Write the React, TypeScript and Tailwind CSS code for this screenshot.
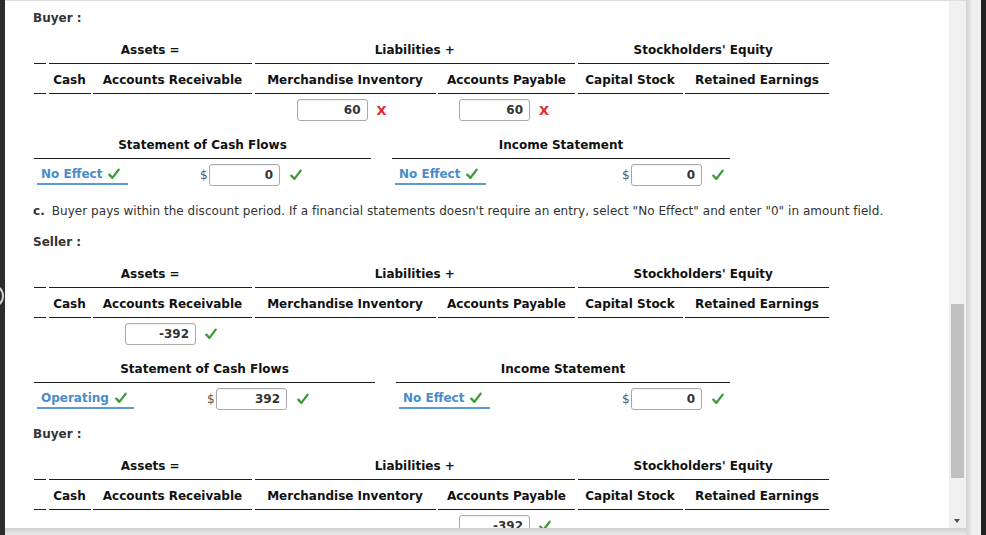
import React from "react";

const FONT = "font-['DejaVu_Sans',Verdana,sans-serif]";

function Check() {
  return (
    <svg width="12" height="12" viewBox="0 0 12 12" className="block shrink-0">
      <path
        d="M1.3 6.6 L4.4 9.9 L10.7 1.6"
        fill="none"
        stroke="#3c9b36"
        strokeWidth="2.3"
        strokeLinecap="round"
        strokeLinejoin="round"
      />
    </svg>
  );
}

function Cross() {
  return <span className="block text-[13px] leading-none font-bold text-[#e3262b]">X</span>;
}

function Amt({ v }: { v: string }) {
  return (
    <div className="h-[22px] w-[71px] shrink-0 rounded-[3px] border border-[#a9a9a9] bg-white shadow-[inset_0_1px_1px_rgba(0,0,0,0.06)] flex items-center justify-end pr-[6px] text-[12px] font-bold text-[#333]">
      {v}
    </div>
  );
}

function Label({ children, className = "" }: { children: React.ReactNode; className?: string }) {
  return (
    <div className={`h-[20px] leading-[22px] text-[12px] font-bold text-[#333] ${className}`}>{children}</div>
  );
}

const HDR =
  "h-[30px] pt-[2px] border-b border-[#1c1c1c] flex items-center justify-center text-[12px] font-bold text-[#111] whitespace-nowrap";

function Equation({ cells }: { cells: React.ReactNode[] }) {
  const cols = [
    "",
    "Cash",
    "Accounts Receivable",
    "Merchandise Inventory",
    "Accounts Payable",
    "Capital Stock",
    "Retained Earnings",
  ];
  return (
    <div className="mt-[7px] w-[795px] grid grid-cols-[12px_42px_159px_181px_137px_105px_144px] gap-x-[2.5px]">
      <div className={HDR} />
      <div className={`${HDR} col-span-2`}>Assets =</div>
      <div className={`${HDR} col-span-2`}>Liabilities +</div>
      <div className={`${HDR} col-span-2`}>Stockholders' Equity</div>
      {cols.map((c, i) => (
        <div key={i} className={HDR}>
          {c}
        </div>
      ))}
      {cells.map((c, i) => (
        <div key={"i" + i} className="h-[36px] pt-[5px]">
          {c}
        </div>
      ))}
    </div>
  );
}

function AmtMark({ v, ok, pad }: { v: string; ok: boolean; pad: string }) {
  return (
    <div className={`flex items-center ${pad}`}>
      <Amt v={v} />
      <div className="ml-[9px]">{ok ? <Check /> : <Cross />}</div>
    </div>
  );
}

function Drop({ text, w }: { text: string; w: string }) {
  return (
    <div className={`ml-[3px] ${w} h-[21px] border-b-2 border-[#5b9bd5] flex items-center pl-[4px] pt-[1px] shrink-0`}>
      <span className="text-[12px] font-bold text-[#4a8bc9] whitespace-nowrap">{text}</span>
      <span className="ml-[6px]">
        <Check />
      </span>
    </div>
  );
}

function Dollar({ v, ml }: { v: string; ml: string }) {
  return (
    <div className={`flex items-center ${ml}`}>
      <span className="w-[9px] text-[12px] text-[#555]">$</span>
      <Amt v={v} />
      <div className="ml-[10px]">
        <Check />
      </div>
    </div>
  );
}

function SCF({
  lw,
  rw,
  lDrop,
  lDropW,
  lMl,
  lVal,
  rMl,
  rowH,
}: {
  lw: string;
  rw: string;
  lDrop: string;
  lDropW: string;
  lMl: string;
  lVal: string;
  rMl: string;
  rowH: string;
}) {
  const H =
    "h-[29px] pt-[2px] border-b border-[#1c1c1c] flex items-center justify-center text-[12px] font-bold text-[#111] whitespace-nowrap";
  return (
    <div className="flex gap-x-[21px]">
      <div className={lw}>
        <div className={H}>Statement of Cash Flows</div>
        <div className={`${rowH} pt-[5px] flex items-start`}>
          <Drop text={lDrop} w={lDropW} />
          <Dollar v={lVal} ml={lMl} />
        </div>
      </div>
      <div className={rw}>
        <div className={H}>Income Statement</div>
        <div className={`${rowH} pt-[5px] flex items-start`}>
          <Drop text="No Effect" w="w-[91px]" />
          <Dollar v="0" ml={rMl} />
        </div>
      </div>
    </div>
  );
}

export default function App() {
  return (
    <div className={`${FONT} w-[986px] h-[535px] flex overflow-hidden bg-white`}>
      <div className="relative w-[5px] h-full bg-[#2c2c2c] overflow-hidden shrink-0">
        <div className="absolute left-[-20px] top-[284px] w-[24px] h-[24px] rounded-full border-2 border-[#d4d4d4]" />
      </div>
      <div className="flex flex-col w-[961px] h-full shrink-0">
        <div className="flex h-[528px] border-t border-[#dedede]">
          <div className="w-[944px] h-full overflow-hidden bg-white pl-[29px] pt-[6px]">
            <Label className="-ml-[1px]">Buyer :</Label>
            <Equation
              cells={[
                null,
                null,
                null,
                <AmtMark key="a" v="60" ok={false} pad="pl-[42px]" />,
                <AmtMark key="b" v="60" ok={false} pad="pl-[21px]" />,
                null,
                null,
              ]}
            />
            <SCF
              lw="w-[337px]"
              rw="w-[338px]"
              lDrop="No Effect"
              lDropW="w-[91px]"
              lMl="ml-[72px]"
              lVal="0"
              rMl="ml-[136px]"
              rowH="h-[41px]"
            />
            <div className="h-[20px] leading-[22px] text-[12px] text-[#333] whitespace-nowrap -ml-[1px] tracking-[0.04px]">
              <span className="font-bold">c.</span>
              <span className="ml-[7px]">
                Buyer pays within the discount period. If a financial statements doesn't require an entry, select "No
                Effect" and enter "0" in amount field.
              </span>
            </div>
            <Label className="mt-[11px] -ml-[1px]">Seller :</Label>
            <Equation
              cells={[
                null,
                null,
                <AmtMark key="c" v="-392" ok={true} pad="pl-[32px]" />,
                null,
                null,
                null,
                null,
              ]}
            />
            <SCF
              lw="w-[341px]"
              rw="w-[334px]"
              lDrop="Operating"
              lDropW="w-[97px]"
              lMl="ml-[73px]"
              lVal="392"
              rMl="ml-[132px]"
              rowH="h-[40px]"
            />
            <Label className="-ml-[1px]">Buyer :</Label>
            <Equation
              cells={[
                null,
                null,
                null,
                null,
                <AmtMark key="d" v="-392" ok={true} pad="pl-[21px]" />,
                null,
                null,
              ]}
            />
          </div>
          <div className="relative w-[17px] h-full bg-[#f0f0f0] shrink-0">
            <div className="absolute top-[303px] left-[2px] w-[13px] h-[174px] bg-[#c1c1c1]" />
            <div className="absolute top-[518px] left-[5px] w-0 h-0 border-l-[3.5px] border-r-[3.5px] border-t-[4px] border-l-transparent border-r-transparent border-t-[#505050]" />
          </div>
        </div>
        <div className="h-[7px] bg-gradient-to-b from-[#cfcfcf] to-[#ebebeb]" />
      </div>
      <div className="w-[5px] h-full bg-gradient-to-r from-[#d2d2d2] to-[#e6e6e6] shrink-0" />
      <div className="w-[10px] h-full bg-[#efefef] shrink-0" />
      <div className="w-[5px] h-full bg-[#222] shrink-0" />
    </div>
  );
}
